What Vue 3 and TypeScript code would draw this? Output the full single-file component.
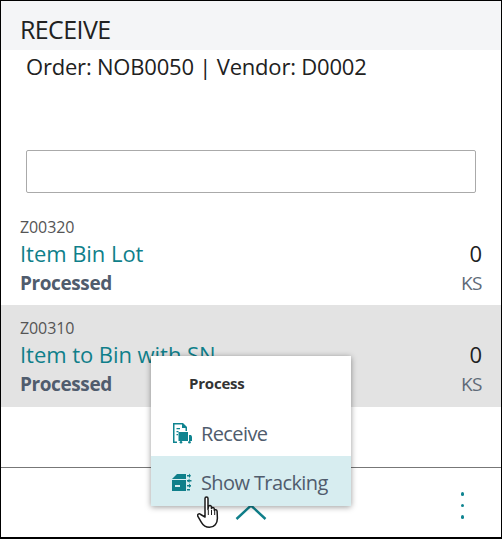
<template>
  <div class="page">
    <div class="header">RECEIVE</div>
    <div class="order">Order: NOB0050 | Vendor: D0002</div>
    <div class="search"><input class="search-input" type="text" /></div>
    <div class="lines">
      <div v-for="line in lines" :key="line.no" class="line" :class="{ selected: line.selected }">
        <div class="line-left">
          <div class="no">{{ line.no }}</div>
          <div class="name">{{ line.name }}</div>
          <div class="status">Processed</div>
        </div>
        <div class="line-right">
          <div class="qty">0</div>
          <div class="uom">KS</div>
        </div>
      </div>
    </div>
    <div class="footer">
      <svg class="chevron" width="32" height="16" viewBox="0 0 32 16">
        <path d="M1.5 15 L16 1.5 L30.5 15" fill="none" stroke="#0f7f8a" stroke-width="2.4" />
      </svg>
      <div class="dots"><i></i><i></i><i></i></div>
    </div>

    <div class="menu">
      <div class="menu-title">Process</div>
      <div class="menu-item">
        <svg width="20" height="21" viewBox="0 0 20 21">
          <path d="M1 0h10l4 4v4h-1.500V5H10V1.500H2.500V18.500H5V20H1z" fill="#0f8490" />
          <path d="M4.500 5h3.500v1.300H4.500zM4.500 8h2v1.300H4.500zM4.500 11h1.500v1.300H4.500z" fill="#0f8490" />
          <rect x="6.500" y="9" width="9.500" height="9" fill="#0f8490" />
          <path d="M17 12h2l1 1.500v4.500h-3z" fill="#0f8490" />
          <circle cx="9" cy="19.300" r="1.300" fill="#0f8490" />
          <circle cx="17.500" cy="19.300" r="1.300" fill="#0f8490" />
        </svg>
        <span>Receive</span>
      </div>
      <div class="menu-item active">
        <svg width="20" height="20" viewBox="0 0 20 20">
          <path d="M0 7 L5 2 H14 V7z" fill="#0f7f8a" />
          <path d="M0 8h14v11H0z" fill="#0f7f8a" />
          <rect x="3" y="13" width="5" height="2" fill="#d7edf0" />
          <path d="M15 3h3v1.500h-3zM15 8h4.500v1.500H15zM15 13h4v1.500h-4zM15 17h3v1.500h-3z" fill="#0f7f8a" />
          <path d="M17 1.500l2 2.200-2 2.200zM17 11.500l2 2.200-2 2.200zM17.500 6.500l-2 2.200 2 2.200z" fill="#0f7f8a" />
        </svg>
        <span>Show Tracking</span>
      </div>
    </div>

    <svg class="cursor" width="26" height="34" viewBox="0 0 26 34">
      <path
        d="M8 2.500c0-2 3-2 3 0V13.500l.5-3c.4-1.600 2.900-1.300 2.900.4l.1 1.600c.4-1.400 2.700-1.200 2.800.5l.1 1.500c.5-1.200 2.600-1 2.700.8l.3 7c0 5-3 9-8 9-4 0-6-1.500-8-5l-3.500-6c-1-1.800 1.200-3.400 2.800-1.800L8 21z"
        fill="#fff" stroke="#1a1a1a" stroke-width="1.500" stroke-linejoin="round"
      />
      <path d="M11.300 14v5M14.500 14v5M17.700 15v4" stroke="#1a1a1a" stroke-width="1" fill="none" />
    </svg>
  </div>
</template>

<script setup lang="ts">
interface Line {
  no: string
  name: string
  selected?: boolean
}

const lines: Line[] = [
  { no: 'Z00320', name: 'Item Bin Lot' },
  { no: 'Z00310', name: 'Item to Bin with SN', selected: true },
]
</script>

<style>
html,
body {
  margin: 0;
  background: #fff;
}
</style>

<style scoped>
.page {
  position: relative;
  box-sizing: border-box;
  width: 502px;
  height: 539px;
  border: 1px solid #000;
  border-width: 1px 1px 2px;
  display: flex;
  flex-direction: column;
  overflow: hidden;
  font-family: "Open Sans", "Noto Sans", sans-serif;
  color: #212121;
  background: #fff;
}

.header {
  height: 49px;
  box-sizing: border-box;
  padding: 13px 0 0 19px;
  background: #f4f5f7;
  font-size: 25px;
  line-height: 30px;
  letter-spacing: -0.6px;
}

.order {
  padding: 3px 0 0 25px;
  font-size: 22px;
  line-height: 27px;
  letter-spacing: -0.2px;
}

.search {
  padding: 70px 25px 0;
}

.search-input {
  display: block;
  box-sizing: border-box;
  width: 100%;
  height: 43px;
  border: 1px solid #aaa;
  border-radius: 2px;
  background: #fff;
}

.lines {
  flex: 1;
  padding-top: 16px;
}

.line {
  display: flex;
  justify-content: space-between;
  height: 96px;
  box-sizing: border-box;
  padding: 8px 19px 0;
}

.line.selected {
  height: 102px;
  padding-top: 13px;
  background: #e3e3e3;
}

.no {
  font-size: 16px;
  line-height: 20px;
  letter-spacing: -0.1px;
  color: #555;
}

.name {
  font-size: 22px;
  line-height: 32px;
  letter-spacing: -0.05px;
  color: #0f7f8a;
}

.status {
  padding-top: 1px;
  font-size: 19px;
  line-height: 27px;
  font-weight: 700;
  letter-spacing: -0.4px;
  color: #505c6d;
}

.line-right {
  padding-top: 20px;
  text-align: right;
}

.qty {
  font-size: 22px;
  line-height: 32px;
}

.uom {
  padding-top: 1px;
  font-size: 19px;
  line-height: 27px;
  letter-spacing: -0.5px;
  color: #606a78;
}

.footer {
  height: 69px;
  border-top: 1px solid #777;
  display: flex;
  justify-content: center;
  position: relative;
}

.chevron {
  margin-top: 36px;
}

.dots {
  position: absolute;
  left: 459.500px;
  top: 24px;
  display: flex;
  flex-direction: column;
  gap: 8px;
}

.dots i {
  display: block;
  width: 3.500px;
  height: 3.500px;
  border-radius: 50%;
  background: #0f8490;
}

.menu {
  position: absolute;
  left: 150px;
  top: 355px;
  width: 200px;
  height: 150px;
  background: #fff;
  box-shadow: 0 1px 6px rgba(0, 0, 0, 0.4);
}

.menu-title {
  padding-left: 38px;
  height: 54px;
  font-size: 15px;
  line-height: 54px;
  font-weight: 700;
  letter-spacing: -0.2px;
  color: #333;
}

.menu-item {
  height: 46px;
  display: flex;
  align-items: center;
  gap: 9px;
  padding-left: 21px;
  font-size: 20px;
  letter-spacing: -0.6px;
  color: #505c6d;
}

.menu-item.active {
  height: 50px;
  box-sizing: border-box;
  padding-top: 2px;
  background: #d7edf0;
}

.cursor {
  position: absolute;
  left: 196px;
  top: 495px;
}
</style>
